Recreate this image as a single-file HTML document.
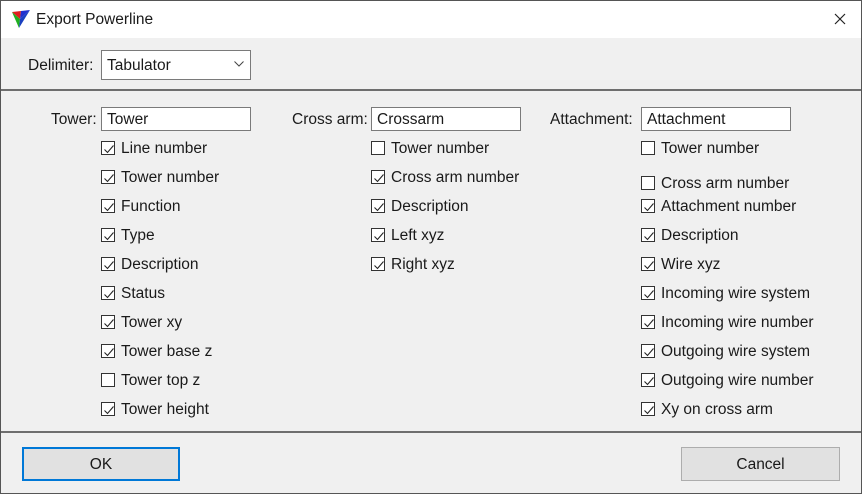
<!DOCTYPE html>
<html><head><meta charset="utf-8"><style>
*{margin:0;padding:0;box-sizing:border-box}
body{width:862px;height:494px;background:#f0f0f0;font-family:"Liberation Sans",sans-serif;font-size:15.5px;color:#1a1a1a;position:relative;overflow:hidden}
.win{position:absolute;left:0;top:0;width:862px;height:494px;border:1px solid #555}
.title{position:absolute;left:1px;top:1px;width:860px;height:37px;background:#fff}
.a{position:absolute;white-space:nowrap;line-height:18px}
.cb{position:absolute;width:14px;height:14px;border:1px solid #333;background:#fff}
.cb svg{position:absolute;left:1px;top:1px}
.in{position:absolute;height:24px;border:1px solid #7a7a7a;background:#fff;padding-left:5px;line-height:23px}
.sep{position:absolute;left:1px;width:860px;height:2px;background:#6e6e6e}
.btn{position:absolute;height:34px;background:#e1e1e1;border:1px solid #adadad;text-align:center;line-height:33px}
</style></head><body>
<div class="win"></div>
<div class="title"></div>
<svg style="position:absolute;left:11px;top:9px" width="20" height="20" viewBox="0 0 20 20"><polygon points="1,3 10,2 9,10" fill="#e02020"/><polygon points="10,2 19,1 9,10" fill="#2030d0"/><polygon points="1,3 9,10 8,19" fill="#20b020"/><polygon points="9,10 19,1 8,19" fill="#1a40c0"/></svg>
<div class="a" style="left:36px;top:11px">Export Powerline</div>
<svg style="position:absolute;left:834px;top:13px" width="12" height="12"><path d="M1 1L11 11M11 1L1 11" stroke="#222" stroke-width="1.2"/></svg>
<div class="a" style="left:28px;top:57px">Delimiter:</div>
<div class="in" style="left:101px;top:50px;width:150px;height:30px;line-height:29px">Tabulator</div>
<svg style="position:absolute;left:234px;top:61px" width="10" height="6"><path d="M0.5 0.5L5 5L9.5 0.5" stroke="#444" fill="none"/></svg>
<div class="sep" style="top:89px"></div>
<div class="a" style="left:51px;top:111px">Tower:</div>
<div class="in" style="left:101px;top:107px;width:150px">Tower</div>
<div class="a" style="left:292px;top:111px">Cross arm:</div>
<div class="in" style="left:371px;top:107px;width:150px">Crossarm</div>
<div class="a" style="left:550px;top:111px">Attachment:</div>
<div class="in" style="left:641px;top:107px;width:150px">Attachment</div>
<div id="c"></div>
<div class="sep" style="top:431px"></div>
<div class="btn" style="left:22px;top:447px;width:158px;border:2px solid #0078d7;line-height:31px">OK</div>
<div class="btn" style="left:681px;top:447px;width:159px">Cancel</div>
<script>
var items=[
[101,148,1,"Line number"],[101,177,1,"Tower number"],[101,206,1,"Function"],[101,235,1,"Type"],[101,264,1,"Description"],[101,293,1,"Status"],[101,322,1,"Tower xy"],[101,351,1,"Tower base z"],[101,380,0,"Tower top z"],[101,409,1,"Tower height"],
[371,148,0,"Tower number"],[371,177,1,"Cross arm number"],[371,206,1,"Description"],[371,235,1,"Left xyz"],[371,264,1,"Right xyz"],
[641,148,0,"Tower number"],[641,183,0,"Cross arm number"],[641,206,1,"Attachment number"],[641,235,1,"Description"],[641,264,1,"Wire xyz"],[641,293,1,"Incoming wire system"],[641,322,1,"Incoming wire number"],[641,351,1,"Outgoing wire system"],[641,380,1,"Outgoing wire number"],[641,409,1,"Xy on cross arm"]];
var h="";
items.forEach(function(i){
h+='<div class="cb" style="left:'+i[0]+'px;top:'+(i[1]-7)+'px">'+(i[2]?'<svg width="12" height="12"><path d="M1.5 6.5L4.5 9.5L10.5 2.5" stroke="#222" stroke-width="1.1" fill="none"/></svg>':'')+'</div>';
h+='<div class="a" style="left:'+(i[0]+20)+'px;top:'+(i[1]-8)+'px">'+i[3]+'</div>';
});
document.getElementById("c").innerHTML=h;
</script>
</body></html>
